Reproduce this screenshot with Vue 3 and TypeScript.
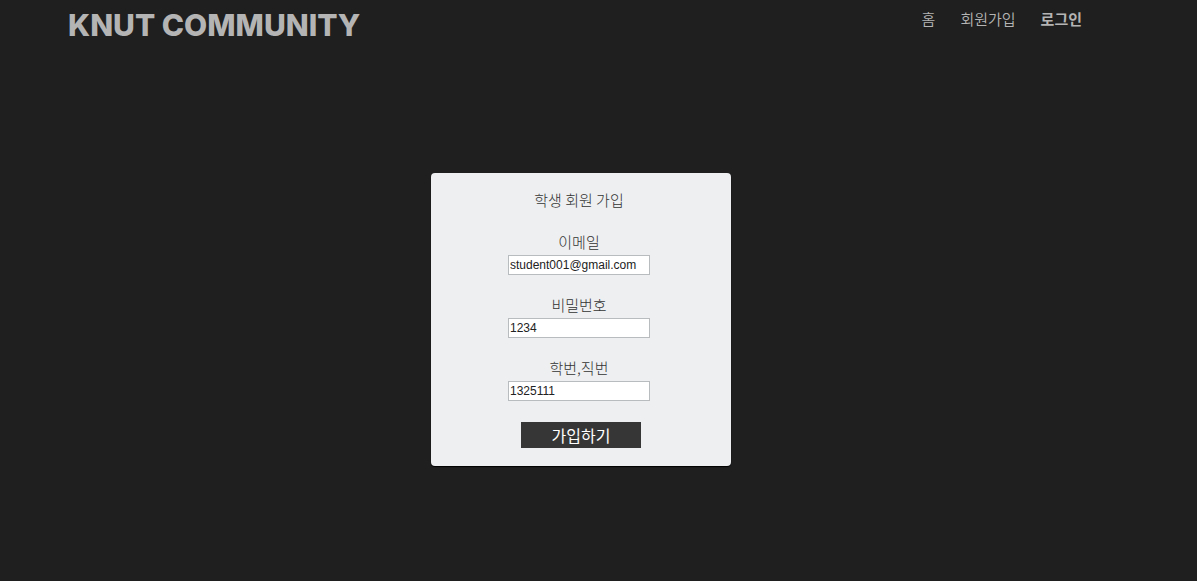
<script setup lang="ts">
import { ref } from 'vue'

interface Field {
  id: string
  label: string
  value: string
}

const fields = ref<Field[]>([
  { id: 'email', label: '이메일', value: 'student001@gmail.com' },
  { id: 'password', label: '비밀번호', value: '1234' },
  { id: 'number', label: '학번,직번', value: '1325111' },
])
</script>

<template>
  <div class="page">
    <header class="top">
      <a class="brand" href="#">KNUT COMMUNITY</a>
      <nav class="menu">
        <a href="#">홈</a>
        <a href="#">회원가입</a>
        <a href="#" class="strong">로그인</a>
      </nav>
    </header>
    <main class="content">
      <form class="card" @submit.prevent>
        <h1 class="title">학생 회원 가입</h1>
        <div v-for="field in fields" :key="field.id" class="field">
          <label :for="field.id">{{ field.label }}</label>
          <input :id="field.id" v-model="field.value" type="text" />
        </div>
        <button type="submit" class="submit">가입하기</button>
      </form>
    </main>
  </div>
</template>

<style>
body {
  margin: 0;
  background: #1f1f1f;
}
</style>

<style scoped>
.page {
  box-sizing: border-box;
  min-height: 100vh;
  padding: 0 103px 0 68px;
  background: #1f1f1f;
  font-family: "Noto Sans CJK KR", sans-serif;
  font-size: 15px;
  line-height: 20px;
}

.top {
  display: flex;
  justify-content: space-between;
  align-items: flex-start;
  padding: 8px 12px 0 0;
}

.brand {
  color: #b4b4b4;
  font-family: Inter, sans-serif;
  font-size: 30px;
  font-weight: 800;
  line-height: 34px;
  text-decoration: none;
  white-space: nowrap;
}

.menu {
  display: flex;
  gap: 25px;
  padding-top: 1px;
}

.menu a {
  color: #b4b4b4;
  font-weight: 350;
  text-decoration: none;
}

.menu .strong {
  font-weight: 700;
}

.content {
  display: flex;
  justify-content: center;
  padding: 131px 0 32px;
}

.card {
  box-sizing: border-box;
  display: flex;
  flex-direction: column;
  align-items: center;
  width: 300px;
  padding: 17px 0 18px;
  border-radius: 4px;
  background: #edeff1;
  box-shadow: 0 1px 1px #000000;
}

.title {
  margin: 0 4px 22px 0;
  color: #333333;
  font-size: 15px;
  font-weight: 300;
}

.field {
  display: flex;
  flex-direction: column;
  align-items: center;
  gap: 3px;
  margin: 0 4px 20px 0;
}

.field label {
  color: #333333;
  font-weight: 300;
}

.field input {
  box-sizing: border-box;
  width: 142px;
  height: 20px;
  padding: 0 1px;
  border: 1px solid #b9bcbf;
  border-radius: 0;
  background: #ffffff;
  color: #222222;
  font-family: "Liberation Sans", Arial, sans-serif;
  font-size: 12px;
}

.submit {
  width: 120px;
  height: 26px;
  margin-top: 1px;
  padding: 0;
  border: 0;
  background: #363636;
  color: #ffffff;
  font-family: "Noto Sans CJK KR", sans-serif;
  font-size: 16px;
  line-height: 26px;
}
</style>
